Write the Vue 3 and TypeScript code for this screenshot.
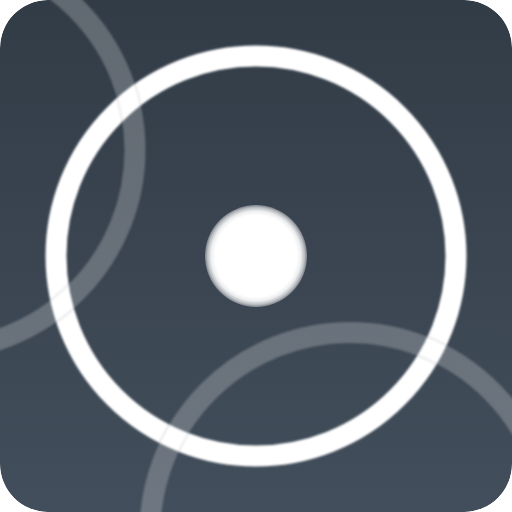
<script setup lang="ts">
const rings = [
  { id: 'a', cx: -65, cy: 150 },
  { id: 'b', cx: 350, cy: 532.5 },
]
</script>

<template>
  <div class="card">
    <svg class="art" viewBox="0 0 512 512" width="512" height="512">
      <defs>
        <linearGradient id="bg" x1="0" y1="0" x2="0" y2="1">
          <stop offset="0" stop-color="#323c47" />
          <stop offset="1" stop-color="#424e5b" />
        </linearGradient>
        <radialGradient id="dot" gradientUnits="userSpaceOnUse" cx="256" cy="256" r="51">
          <stop offset="0.8" stop-color="#ffffff" />
          <stop offset="0.88" stop-color="#eeeff0" />
          <stop offset="0.95" stop-color="#babdc1" />
          <stop offset="1" stop-color="#7d838b" />
        </radialGradient>
        <filter id="soft" x="-10%" y="-10%" width="120%" height="120%">
          <feGaussianBlur stdDeviation="0.9" />
        </filter>
      </defs>
      <rect width="512" height="512" rx="48" fill="url(#bg)" />
      <circle cx="256" cy="256" r="200" fill="none" stroke="#ffffff" stroke-width="21" filter="url(#soft)" />
      <g v-for="r in rings" :key="r.id" filter="url(#soft)">
        <circle :cx="r.cx" :cy="r.cy" r="200" fill="none" stroke="#ffffff" stroke-opacity="0.23" stroke-width="21" />
        <circle :cx="r.cx" :cy="r.cy" r="189.5" fill="none" stroke="#39424e" stroke-opacity="0.16" stroke-width="1.5" />
        <circle :cx="r.cx" :cy="r.cy" r="210.5" fill="none" stroke="#39424e" stroke-opacity="0.16" stroke-width="1.5" />
      </g>
      <circle cx="256" cy="256" r="51" fill="url(#dot)" />
    </svg>
  </div>
</template>

<style scoped>
.card {
  width: 512px;
  height: 512px;
  border-radius: 48px;
  overflow: hidden;
}
.art {
  display: block;
}
</style>
